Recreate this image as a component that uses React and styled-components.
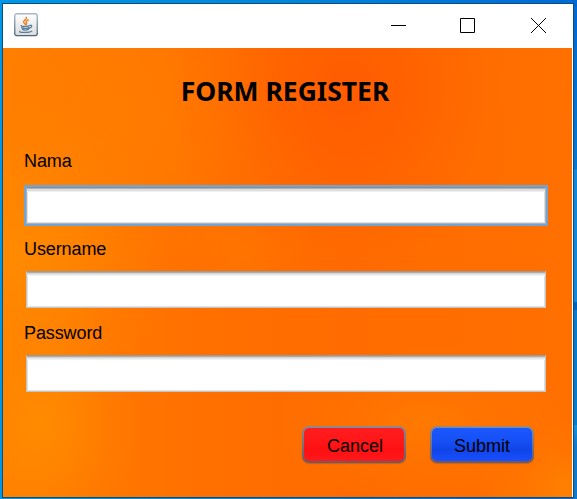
import React from "react";
import styled, { createGlobalStyle, css } from "styled-components";

const GlobalStyle = createGlobalStyle`
  * { box-sizing: border-box; }
  body { margin: 0; overflow: hidden; }
`;

const Desktop = styled.div`
  width: 577px;
  height: 499px;
  padding: 3px 3px 1px 2px;
  font-family: "Liberation Sans", Arial, sans-serif;
  background:
    linear-gradient(#0068d2 0, #0876d0 169px, #1687d8 170px, #1687d8 302px, #0062bd 302px, #0062bd 310px, #0a7acb 310px, #0a7acb 425px, #1493dc 425px, #1478c8 445px) right / 4px 100% no-repeat,
    linear-gradient(90deg, #0097e6, #0086dc 50%, #0069d6);
`;

const Window = styled.div`
  display: flex;
  flex-direction: column;
  width: 572px;
  height: 495px;
  border: 1px solid #134b77;
  background: #fff;
`;

const TitleBar = styled.header`
  display: flex;
  align-items: flex-start;
  justify-content: space-between;
  height: 44px;
  padding: 9px 26px 0 11px;
  background: #fff;
`;

const WindowControls = styled.div`
  display: flex;
  gap: 54px;
  padding-top: 4px;
`;

const ControlButton = styled.button`
  display: flex;
  width: 17px;
  height: 17px;
  padding: 0;
  border: 0;
  background: none;

  svg { overflow: visible; }
`;

const Body = styled.form`
  flex: 1;
  width: 569px;
  padding: 26px 25px 0 21px;
  background:
    radial-gradient(ellipse 180px 200px at 345px 40px, #ff5a00d8 0%, #ff5a0090 35%, #ff5a0028 70%, #ff5a0000 100%),
    radial-gradient(ellipse 100px 130px at 36px 375px, #ff8b00 0%, #ff8b0090 40%, #ff8b0028 72%, #ff8b0000 100%),
    radial-gradient(ellipse 160px 160px at 10px 210px, #ff8a00 0%, #ff8a0090 40%, #ff8a0028 72%, #ff8a0000 100%),
    radial-gradient(ellipse 200px 160px at 120px 70px, #ff820080 0%, #ff820058 40%, #ff820018 72%, #ff820000 100%),
    radial-gradient(ellipse 70px 60px at 240px 200px, #ff7a0080 0%, #ff7a0030 50%, #ff7a0000 100%),
    radial-gradient(ellipse 150px 80px at 420px 375px, #ff7900 0%, #ff790070 45%, #ff790000 100%),
    radial-gradient(ellipse 90px 70px at 565px 440px, #ff8000 0%, #ff800060 45%, #ff800000 100%),
    linear-gradient(90deg, #ff7e00 0, #ff7000 35%, #ff6b00 60%, #ff7000 100%);
`;

const Title = styled.h1`
  margin: 0 0 42px;
  padding-right: 1px;
  font: 700 26.5px/35px "Noto Sans", "Open Sans", sans-serif;
  text-align: center;
  color: #000;
`;

const Label = styled.label`
  display: block;
  height: 20px;
  font-size: 18px;
  line-height: 20px;
  letter-spacing: -0.1px;
  color: #000;
`;

const focusRing = css`
  border-color: #a9b4bf;
  border-top-color: #84909b;
  box-shadow: 0 0 0 2px #73a4d1, inset 0 1px #b0b0b0, inset 0 3px #dedede,
    inset 0 4px #f0f0f0, inset 1px 0 #dfdfdf, inset -1px 0 #dfdfdf, inset 0 -1px #e0e0e0;
`;

const TextField = styled.input`
  display: block;
  width: 520px;
  height: 37px;
  margin: ${(p) => p.$margin};
  padding: 4px 8px;
  border: 1px solid #c4c5c7;
  border-top-color: #9c9a98;
  border-radius: 0;
  outline: 0;
  background: #fff;
  font: 18px "Liberation Sans", Arial, sans-serif;
  box-shadow: inset 0 1px #acacac, inset 0 2px #d4d4d4, inset 0 3px #e6e6e6, inset 0 4px #f2f2f2,
    inset 1px 0 #dfdfdf, inset -1px 0 #dfdfdf, inset 0 -1px #e3e3e3;
  ${(p) => p.$focused && focusRing}
`;

const Actions = styled.div`
  display: flex;
  justify-content: flex-end;
  gap: 24px;
  padding: 34px 13px 0 0;
`;

const ActionButton = styled.button`
  width: 104px;
  height: 37px;
  padding: 3px 0 0 ${(p) => p.$nudge || 0};
  border: 2px solid transparent;
  border-radius: 7px;
  background:
    linear-gradient(${(p) => p.$fill}) padding-box,
    linear-gradient(#8b8a91, #6b5963) border-box;
  box-shadow: 0 1px 1px #8c4c1c66;
  color: #000;
  font: 18px "Liberation Sans", Arial, sans-serif;
`;

const JavaIcon = () => (
  <svg width="24" height="24" viewBox="0 0 24 24" role="img" aria-label="Java">
    <defs>
      <linearGradient id="tile" x2="0" y2="1">
        <stop stopColor="#fff" />
        <stop offset="1" stopColor="#dcdcdc" />
      </linearGradient>
      <linearGradient id="edge" x2="0" y2="1">
        <stop stopColor="#a9b8c5" />
        <stop offset="1" stopColor="#4d6679" />
      </linearGradient>
    </defs>
    <rect x=".75" y=".75" width="22.5" height="21.8" rx="2" fill="url(#tile)" stroke="url(#edge)" strokeWidth="1.3" />
    <g fill="none" strokeLinecap="round">
      <path d="M12.3 4.4c1 2-3 3-2.8 4.6.1 1 1.4 1.5 1.8 2.6M14.2 7c-1.8.8-2.6 1.6-1.8 2.6.6.8.3 1.4-.4 2.1" stroke="#ee8127" strokeWidth="1.5" />
      <path d="M7.2 12.6c-1.6.9 7 1.2 9 0M7.6 14.6c1.7.8 5.7.8 7.6 0M8.4 16.4c1.6.7 4.5.7 6 0M15.8 12.4c2.8-.9 2.6 2-.6 2.9M6 18.2c-2.6 1.5 9 1.8 11.8 0" stroke="#557f9d" strokeWidth="1.2" />
    </g>
  </svg>
);

const controls = [
  { name: "Minimize", path: "M3 8.5h15" },
  { name: "Maximize", path: "M1.5 1.5h14v14h-14z" },
  { name: "Close", path: "M1 1l15 15M16 1L1 16" },
];

export default function App() {
  return (
    <Desktop>
      <GlobalStyle />
      <Window>
        <TitleBar>
          <JavaIcon />
          <WindowControls>
            {controls.map(({ name, path }) => (
              <ControlButton key={name} type="button" aria-label={name}>
                <svg width="17" height="17" fill="none" stroke="#000">
                  <path d={path} />
                </svg>
              </ControlButton>
            ))}
          </WindowControls>
        </TitleBar>
        <Body onSubmit={(e) => e.preventDefault()}>
          <Title>FORM REGISTER</Title>
          <Label htmlFor="nama">Nama</Label>
          <TextField id="nama" $focused $margin="16px 0 15px 2px" />
          <Label htmlFor="username">Username</Label>
          <TextField id="username" $margin="12px 0 15px 2px" />
          <Label htmlFor="password">Password</Label>
          <TextField id="password" type="password" $margin="12px 0 0 2px" />
          <Actions>
            <ActionButton type="button" $nudge="2px" $fill="#ff1d20, #ff1515 50%, #ff1012 65%, #ff191b">Cancel</ActionButton>
            <ActionButton type="submit" $fill="#1b58ff, #1650f5 40%, #1045e8 65%, #194fff">Submit</ActionButton>
          </Actions>
        </Body>
      </Window>
    </Desktop>
  );
}
